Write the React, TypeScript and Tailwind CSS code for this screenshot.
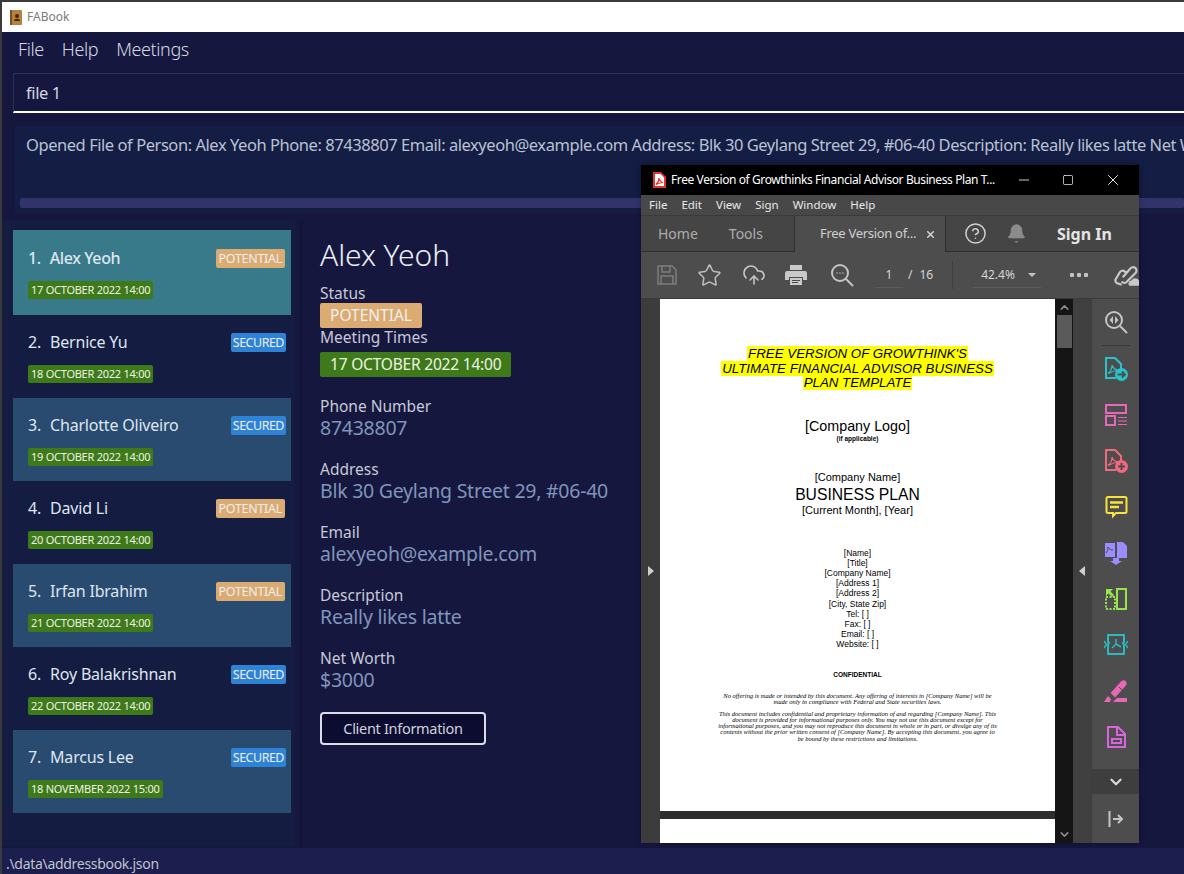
import { CloudUpload, Star, X, Minus, Square, ChevronUp, ChevronDown, HelpCircle, Bell } from "lucide-react";
import type { ReactNode } from "react";

interface Person {
  name: string;
  tag: "POTENTIAL" | "SECURED";
  date: string;
  bg: string;
}

const people: Person[] = [
  { name: "Alex Yeoh", tag: "POTENTIAL", date: "17 OCTOBER 2022 14:00", bg: "bg-[#387a8a]" },
  { name: "Bernice Yu", tag: "SECURED", date: "18 OCTOBER 2022 14:00", bg: "bg-[#141c42]" },
  { name: "Charlotte Oliveiro", tag: "SECURED", date: "19 OCTOBER 2022 14:00", bg: "bg-[#2a4b70]" },
  { name: "David Li", tag: "POTENTIAL", date: "20 OCTOBER 2022 14:00", bg: "bg-[#141c42]" },
  { name: "Irfan Ibrahim", tag: "POTENTIAL", date: "21 OCTOBER 2022 14:00", bg: "bg-[#2a4b70]" },
  { name: "Roy Balakrishnan", tag: "SECURED", date: "22 OCTOBER 2022 14:00", bg: "bg-[#141c42]" },
  { name: "Marcus Lee", tag: "SECURED", date: "18 NOVEMBER 2022 15:00", bg: "bg-[#2a4b70]" },
];

const fields = [
  ["Phone Number", "87438807"],
  ["Address", "Blk 30 Geylang Street 29, #06-40"],
  ["Email", "alexyeoh@example.com"],
  ["Description", "Really likes latte"],
  ["Net Worth", "$3000"],
];

const contactLines = ["[Name]", "[Title]", "[Company Name]", "[Address 1]", "[Address 2]", "[City, State Zip]", "Tel: [ ]", "Fax: [ ]", "Email: [ ]", "Website: [ ]"];

const acrobat = "M8 8c0 4-2 7-4 8.500M8 8c1 3 4 5 7 5M4 16.500c2-1 6-3 11-3.500";

function Ico({ children, w = 24 }: { children: ReactNode; w?: number }) {
  return (
    <svg width={w} height={w} viewBox="0 0 24 24" fill="none" strokeWidth="2">
      {children}
    </svg>
  );
}

function DocBadge({ color, plus }: { color: string; plus: boolean }) {
  return (
    <Ico>
      <path d="M12 21H2V1h9l6 6v5" stroke={color} />
      <path d={acrobat} stroke={color} strokeWidth="1.100" />
      <circle cx="17.500" cy="17.500" r="6.500" fill={color} />
      {plus ? (
        <path d="M14 17.500h7M17.500 14v7" stroke="#4d4d4d" strokeWidth="2" />
      ) : (
        <path d="M13.500 17.500h7M18 14.500l3 3-3 3" stroke="#4d4d4d" strokeWidth="1.800" />
      )}
    </Ico>
  );
}

function RailIcons() {
  return [
    <DocBadge key="export" color="#2bc3c9" plus={false} />,
    <Ico key="organize">
      <rect x="2" y="2" width="20" height="8" stroke="#e868b8" />
      <rect x="2" y="13" width="9" height="9" stroke="#e868b8" />
      <path d="M14 14.500h9M14 18h9M14 21.500h9" stroke="#e868b8" strokeWidth="1" />
    </Ico>,
    <DocBadge key="create" color="#f0697d" plus />,
    <Ico key="comment">
      <path d="M4 2h17a1.500 1.500 0 0 1 1.500 1.500v13a1.500 1.500 0 0 1-1.500 1.500h-9l-3 3v-3H4a1.500 1.500 0 0 1-1.500-1.500v-13A1.500 1.500 0 0 1 4 2z" stroke="#f7e23e" />
      <path d="M6 7.500h13M6 12h9" stroke="#f7e23e" strokeWidth="2.400" />
    </Ico>,
    <Ico key="combine">
      <path d="M1 2h10v14H1z" fill="#9a8eff" />
      <path d="M13 1h6l4 4v12H13z" fill="#9a8eff" />
      <path d="M4 6c0 3-1 5-2 6M4 6c1 2 3 3 5 3" stroke="#4d4d4d" strokeWidth="1" />
      <path d="M9 17h6v3h3l-6 4-6-4h3z" fill="#9a8eff" />
    </Ico>,
    <Ico key="compress">
      <rect x="13" y="2" width="9" height="20" stroke="#97e54b" />
      <rect x="2" y="10" width="9" height="12" stroke="#97e54b" strokeDasharray="2 1.500" />
      <path d="M2 2l7 0-2.500 2.500L10 8 8 10 4.500 6.500 2 9z" fill="#97e54b" />
    </Ico>,
    <Ico key="redact">
      <path d="M4 2h16v7l-1 1 1 2v9H4v-9l1-2-1-1z" stroke="#2bb8c0" />
      <path d="M12 6v5M12 11l-4 4M12 11l5 3" stroke="#2bb8c0" strokeWidth="1.500" />
      <path d="M0 8l2.500 3.500L0 15M24 8l-2.500 3.500L24 15" stroke="#2bb8c0" strokeWidth="1.400" />
    </Ico>,
    <Ico key="sign">
      <path d="M8 14L18 3c2-2 5 1 3 3L11 17z" fill="#e868b8" stroke="#e868b8" />
      <path d="M15 8l3 3" stroke="#4d4d4d" strokeWidth="1" />
      <path d="M0 23l4-6 3 3-1 3zM9 23l4-4h10v4z" fill="#e868b8" />
    </Ico>,
    <Ico key="form">
      <path d="M4 2h10l7 7v13H4z" stroke="#d964e0" />
      <path d="M13 2v8h8" stroke="#d964e0" />
      <rect x="8" y="14" width="9" height="4" stroke="#d964e0" />
    </Ico>,
  ];
}

function PdfWindow() {
  return (
    <div className="absolute left-[639px] top-[163px] flex h-[678px] w-[498px] flex-col overflow-hidden bg-[#4d4d4d] text-[#d6d6d6] shadow-[0_0_6px_rgba(0,0,0,0.35)]" style={{ fontFamily: '"Noto Sans", sans-serif' }}>
      <div className="flex h-[30px] shrink-0 items-center bg-black pl-[11px]">
        <svg width="14" height="16" viewBox="0 0 14 16" className="shrink-0">
          <path d="M1 0h8l5 5v11H1z" fill="#e8322c" />
          <path d="M3 2h5.500L12 5.500V14H3z" fill="#fff" />
          <path d="M7 6c0 3-1.500 5-3 6.500 2-1 4-2 7-2-2-.5-3.500-2-4-4.500z" fill="none" stroke="#e8322c" strokeWidth="1.200" />
        </svg>
        <span className="ml-[5px] w-[326px] shrink-0 whitespace-nowrap text-[12px] tracking-[-0.4px] text-white">Free Version of Growthinks Financial Advisor Business Plan T...</span>
        <Minus size={16} className="ml-[19px] shrink-0 text-white" strokeWidth={1.2} />
        <Square size={12} className="ml-[30px] shrink-0 text-white" strokeWidth={1.4} />
        <X size={18} className="ml-[30px] shrink-0 text-white" strokeWidth={1.2} />
      </div>
      <div className="flex h-5 shrink-0 items-center gap-[14px] bg-[#484848] pl-[8px] text-[11.500px] text-[#e8e8e8]">
        <span>File</span>
        <span>Edit</span>
        <span>View</span>
        <span>Sign</span>
        <span>Window</span>
        <span>Help</span>
      </div>
      <div className="flex h-[37px] shrink-0 items-center border-t border-[#3a3a3a] bg-[#454545]">
        <div className="flex h-full w-[153px] shrink-0 items-center gap-[31px] border-b border-[#303030] pl-[17px] text-[14px] text-[#adadad]">
          <span>Home</span>
          <span>Tools</span>
        </div>
        <div className="flex h-full w-[152px] shrink-0 items-center whitespace-nowrap border-x border-[#303030] bg-[#4d4d4d] pl-[25px] text-[13px] tracking-[-0.3px] text-[#d0d0d0]">
          <span>Free Version of...</span>
          <X size={11} strokeWidth={3.5} className="ml-[9px]" />
        </div>
        <div className="flex h-full flex-1 items-center border-b border-[#303030] pl-[18px]">
          <HelpCircle size={23} strokeWidth={1.6} className="text-[#cfcfcf]" />
          <Bell size={21} fill="#8c8c8c" strokeWidth={1} className="ml-[19px] text-[#8c8c8c]" />
          <span className="ml-[30px] whitespace-nowrap text-[16px] font-bold text-[#e4e4e4]">Sign In</span>
        </div>
      </div>
      <div className="flex h-[47px] shrink-0 items-center border-b border-[#3a3a3a] pl-[16px]">
        <svg width="20" height="20" viewBox="0 0 20 20" fill="none" stroke="#7d7d7d" strokeWidth="1.500" className="shrink-0">
          <path d="M1 1h14l4 4v14H1zM5 1v6h8V1M4 19v-8h12v8" />
        </svg>
        <Star size={25} strokeWidth={1.5} className="ml-[20px] shrink-0 text-[#bdbdbd]" />
        <CloudUpload size={24} strokeWidth={1.6} className="ml-[20px] shrink-0 text-[#c6c6c6]" />
        <svg width="22" height="20" viewBox="0 0 22 20" className="ml-[19px] shrink-0">
          <path d="M5 0h12v5H5zM2 6h18a2 2 0 0 1 2 2v7h-4v-3H4v3H0V8a2 2 0 0 1 2-2zM5 13h12v7H5z" fill="#c9c9c9" />
          <path d="M7 15.500h8M7 17.500h6" stroke="#4d4d4d" />
        </svg>
        <svg width="24" height="24" viewBox="0 0 24 24" fill="none" stroke="#c4c4c4" strokeWidth="2" className="ml-[23px] shrink-0">
          <circle cx="10" cy="10" r="8" />
          <path d="M16 16l7 7" />
          <path d="M6.500 10h1M9.500 10h1M12.500 10h1" strokeWidth="1.500" />
        </svg>
        <div className="ml-[21px] mt-[3px] w-[28px] border-b border-[#5c5c5c] pb-[3px] text-center text-[12px]">1</div>
        <span className="ml-[5px] text-[12px]">/</span>
        <span className="ml-[7px] text-[12px]">16</span>
        <div className="ml-[19px] h-[28px] w-px bg-[#3e3e3e]" />
        <div className="ml-[20px] mt-[3px] flex w-[68px] items-center border-b border-[#5c5c5c] pb-[3px] pl-[8px] text-[12px]">
          <span>42.4%</span>
          <span className="ml-[13px] h-0 w-0 border-x-[4px] border-t-[4px] border-x-transparent border-t-[#c4c4c4]" />
        </div>
        <div className="ml-[29px] flex gap-[3px]">
          <span className="size-[4px] rounded-[1px] bg-[#c4c4c4]" />
          <span className="size-[4px] rounded-[1px] bg-[#c4c4c4]" />
          <span className="size-[4px] rounded-[1px] bg-[#c4c4c4]" />
        </div>
        <svg width="26" height="26" viewBox="0 0 24 24" fill="none" stroke="#c8c8c8" strokeWidth="2" className="ml-[25px] shrink-0">
          <path d="M9 14l7-8a3 3 0 0 1 5 4l-8 8a3 3 0 0 1-5 0M13 10l-2-1a3 3 0 0 0-5 1l-3 5a3 3 0 0 0 2 5l3 1" />
          <path d="M15 22a3 3 0 0 1 2-5 4 4 0 0 1 7 0v5z" fill="#c8c8c8" stroke="none" />
        </svg>
      </div>
      <div className="flex min-h-0 flex-1">
        <div className="flex w-[19px] items-center justify-center bg-[#3c3c3c]">
          <span className="h-0 w-0 border-y-[5px] border-l-[6px] border-y-transparent border-l-[#cfcfcf]" />
        </div>
        <div className="flex w-[395px] flex-col">
          <div className="h-[512px] bg-white text-center text-black" style={{ fontFamily: '"Liberation Sans", sans-serif' }}>
            <div className="pt-[48px] text-[13.300px] font-medium italic leading-[14.500px]">
              <div><span className="bg-[#ffff00] px-px">FREE VERSION OF GROWTHINK'S</span></div>
              <div><span className="bg-[#ffff00] px-px">ULTIMATE FINANCIAL ADVISOR BUSINESS</span></div>
              <div><span className="bg-[#ffff00] px-px">PLAN TEMPLATE</span></div>
            </div>
            <div className="mt-[26px] text-[14.300px] leading-[18px]">[Company Logo]</div>
            <div className="text-[6.500px] font-bold leading-[8px]">(if applicable)</div>
            <div className="mt-[28px] text-[11px] leading-[12px]">[Company Name]</div>
            <div className="mt-[1px] text-[15.700px] leading-[21px]">BUSINESS PLAN</div>
            <div className="-mt-px text-[11px] leading-[12px]">[Current Month], [Year]</div>
            <div className="mt-[32px] text-[8.500px] leading-[10.200px]">
              {contactLines.map((l) => <div key={l}>{l}</div>)}
            </div>
            <div className="mt-[20px] text-[6.500px] font-bold">CONFIDENTIAL</div>
            <div className="mt-[14px] text-[6.500px] italic leading-[6.200px]" style={{ fontFamily: '"Liberation Serif", serif' }}>
              <div>No offering is made or intended by this document.  Any offering of interests in [Company Name] will be</div>
              <div>made only in compliance with Federal and State securities laws.</div>
              <div className="mt-[5px]">This document includes confidential and proprietary information of and regarding [Company Name].  This</div>
              <div>document is provided for informational purposes only.  You may not use this document except for</div>
              <div>informational purposes, and you may not reproduce this document in whole or in part, or divulge any of its</div>
              <div>contents without the prior written consent of [Company Name]. By accepting this document, you agree to</div>
              <div>be bound by these restrictions and limitations.</div>
            </div>
          </div>
          <div className="h-2 bg-[#2e2e2e]" />
          <div className="flex-1 bg-white" />
        </div>
        <div className="flex w-[18px] flex-col items-center bg-[#151515]">
          <ChevronUp size={13} strokeWidth={3} className="mt-[2px] text-[#8a8a8a]" />
          <div className="mt-[1px] h-[33px] w-[15px] bg-[#5a5a5a]" />
          <div className="flex-1" />
          <ChevronDown size={13} strokeWidth={3} className="mb-[2px] text-[#8a8a8a]" />
        </div>
        <div className="flex w-[18px] items-center justify-center bg-[#404040]">
          <span className="h-0 w-0 border-y-[5px] border-r-[6px] border-y-transparent border-r-[#cfcfcf]" />
        </div>
        <div className="flex w-[48px] flex-col items-center border-l border-[#3e3e3e]">
          <div className="flex h-[46px] w-full flex-col items-center justify-center">
            <svg width="24" height="24" viewBox="0 0 24 24" fill="none" stroke="#c4c4c4" strokeWidth="2">
              <circle cx="10" cy="10" r="8" />
              <path d="M16 16l7 7" />
              <path d="M9 6v8L5.500 10zM11 6v8l3.500-4z" fill="#c4c4c4" stroke="none" />
            </svg>
          </div>
          <div className="h-px w-[28px] bg-[#3a3a3a]" />
          {RailIcons().map((icon, i) => (
            <div key={i} className="flex h-[46px] shrink-0 items-center justify-center">{icon}</div>
          ))}
          <div className="mt-[9px] flex h-[25px] w-full shrink-0 items-center justify-center bg-[#3e3e3e]">
            <ChevronDown size={18} strokeWidth={3} className="text-[#d8d8d8]" />
          </div>
          <div className="flex flex-1 items-center justify-center">
            <svg width="16" height="16" viewBox="0 0 16 16" fill="none" stroke="#c4c4c4" strokeWidth="2">
              <path d="M1.500 0v16" />
              <path d="M5 8h9M10 4l4 4-4 4" />
            </svg>
          </div>
        </div>
      </div>
    </div>
  );
}

function Card({ person, index }: { person: Person; index: number }) {
  const potential = person.tag === "POTENTIAL";
  return (
    <div className={`${person.bg} ${index === 0 ? "h-[85px] pt-[17px]" : "h-[83px] pt-[16px]"} pl-[15px] pr-[5px]`}>
      <div className="flex h-[22px] items-center justify-between">
        <span className={`${index === 0 ? "font-medium tracking-[-0.4px]" : "tracking-[-0.2px]"} text-[16px] text-[#dfe6f0]`}>
          <span className="mr-[9px]">{index + 1}.</span>
          {person.name}
        </span>
        <span className={`${potential ? "mr-px bg-[#dcab71] px-[3px] tracking-[-0.3px]" : "bg-[#2f83d6] px-[2px] tracking-[-0.5px]"} rounded-[2px] text-[12.500px] leading-[19px] text-[#eceff3]`}>{person.tag}</span>
      </div>
      <div className="mt-[12px] flex">
        <span className="rounded-[2px] bg-[#3f7a1a] px-[3px] text-[11px] leading-[18px] tracking-[-0.25px] text-[#eef3e6]">{person.date}</span>
      </div>
    </div>
  );
}

export default function App() {
  return (
    <div className="relative flex h-[874px] w-[1184px] flex-col overflow-hidden border-l-2 border-t-2 border-[#3a3a3a] bg-[#16173f]" style={{ fontFamily: '"Noto Sans", sans-serif' }}>
      <div className="flex h-[30px] shrink-0 items-center bg-white pl-[8px]">
        <svg width="12" height="15" viewBox="0 0 12 15">
          <rect width="12" height="15" rx="1" fill="#b8803a" />
          <rect x="0" width="2" height="15" fill="#7a4f1e" />
          <circle cx="7" cy="6" r="2" fill="#3a2a12" />
          <path d="M4 11c0-3 6-3 6 0z" fill="#3a2a12" />
        </svg>
        <span className="ml-[5px] text-[12px] text-[#7c7c7c]">FABook</span>
      </div>

      <div className="flex h-[35px] shrink-0 items-center gap-[18px] pl-[16px] text-[18px] font-light tracking-[-0.4px] text-[#d4d7e2]">
        <span>File</span>
        <span>Help</span>
        <span>Meetings</span>
      </div>

      <div className="ml-[11px] mt-[6px] flex h-[40px] shrink-0 items-center border border-b-2 border-[#2c2e55] border-b-white border-r-0 pl-[12px] pt-[1px] text-[16.500px] tracking-[-0.4px] text-[#d4d6e0]">
        file 1
      </div>

      <div className="ml-[13px] mt-[13px] h-[87px] shrink-0 overflow-hidden bg-[#141d43] pl-[11px] pt-[7px]">
        <div className="whitespace-nowrap text-[16.500px] tracking-[-0.45px] text-[#b9c2d4]">
          Opened File of Person: Alex Yeoh Phone: 87438807 Email: alexyeoh@example.com Address: Blk 30 Geylang Street 29, #06-40 Description: Really likes latte Net Worth: $3000
        </div>
        <div className="-ml-[6px] mt-[40px] h-[10px] rounded-[2px] bg-[#33336b]" />
      </div>

      <div className="mt-[7px] flex min-h-0 flex-1">
        <div className="w-[293px] shrink-0 bg-[#141c42] pl-[11px] pr-[4px] pt-[10px]">
          {people.map((p, i) => (
            <Card key={p.name} person={p} index={i} />
          ))}
        </div>
        <div className="ml-[5px] flex-1 border-l-[3px] border-[#121535] pl-[17px] pt-[15px]">
          <div className="text-[30px] font-light leading-[40px] tracking-[-0.1px] text-[#eceef5]">Alex Yeoh</div>
          <div className="mt-[8px] text-[15.500px] leading-[20px] text-[#c6c9d6]">Status</div>
          <div className="flex">
            <span className="rounded-[2px] bg-[#dcab71] px-[10px] text-[15.500px] leading-[25px] text-[#eef0f3]">POTENTIAL</span>
          </div>
          <div className="-mt-px text-[15.500px] leading-[20px] text-[#c6c9d6]">Meeting Times</div>
          <div className="mt-[5px] flex">
            <span className="rounded-[2px] bg-[#3f7a1a] px-[10px] text-[15.500px] leading-[25px] tracking-[-0.2px] text-[#eef3e6]">17 OCTOBER 2022 14:00</span>
          </div>
          <div className="mt-[19px] flex flex-col gap-[19px]">
            {fields.map(([label, value]) => (
              <div key={label}>
                <div className="text-[15.500px] leading-[20px] text-[#c6c9d6]">{label}</div>
                <div className="text-[19.500px] leading-[24px] tracking-[-0.25px] text-[#7f95ba]">{value}</div>
              </div>
            ))}
          </div>
          <button className="mt-[20px] block h-[33px] w-[166px] rounded-[4px] border-2 border-[#dcdce6] bg-[#0c0c30] text-[14.500px] tracking-[-0.3px] text-[#cfd2dc]">Client Information</button>
        </div>
      </div>

      <div className="mt-[2px] flex h-[26px] shrink-0 items-center bg-[#1c1e4d] pl-[4px] pt-[5px] text-[14px] tracking-[-0.3px] text-[#c0c3d0]">.\data\addressbook.json</div>

      <PdfWindow />
    </div>
  );
}
